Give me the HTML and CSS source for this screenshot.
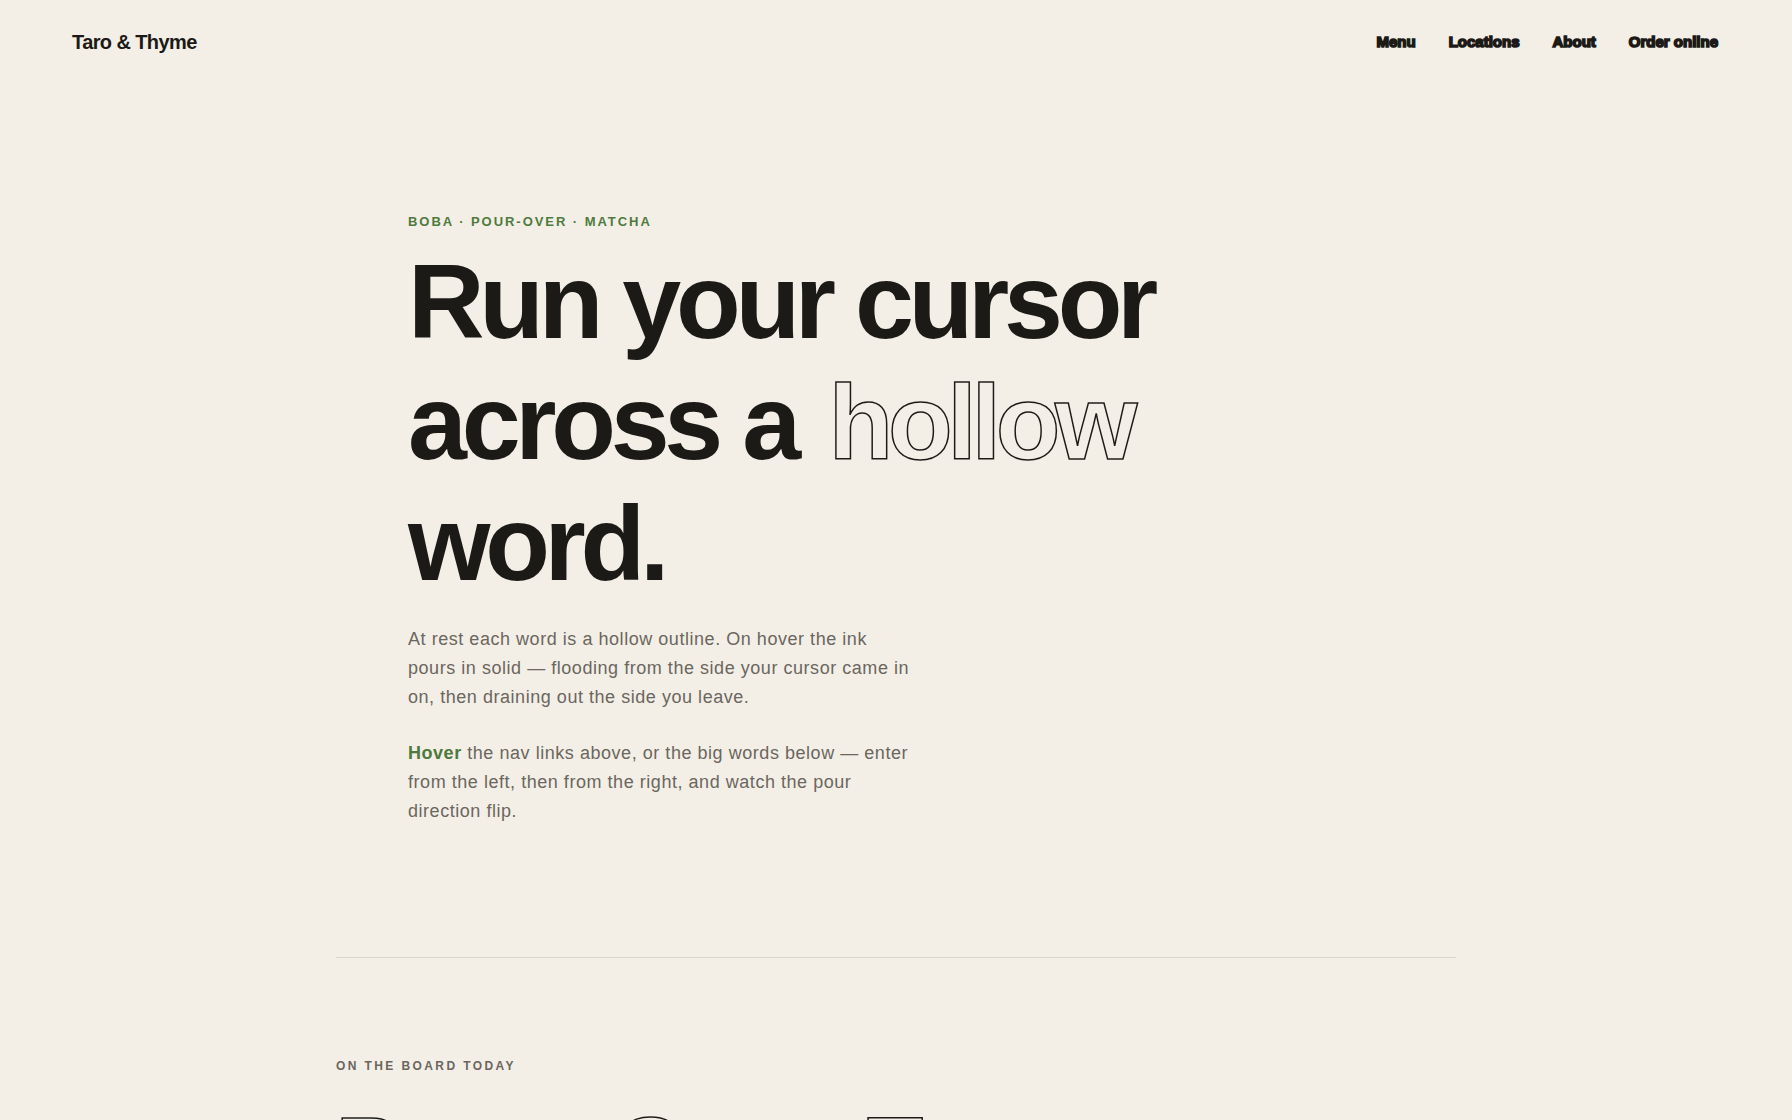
FILE: index.html
```html
<!DOCTYPE html>
<html lang="en">
<head>
<meta charset="utf-8">
<title>Taro &amp; Thyme</title>
<link rel="stylesheet" href="styles.css">
</head>
<body>
<header class="site-header">
  <a class="logo" href="#">Taro &amp; Thyme</a>
  <nav class="nav">
    <a href="#">Menu</a>
    <a href="#">Locations</a>
    <a href="#">About</a>
    <a href="#">Order online</a>
  </nav>
</header>

<main>
  <section class="hero">
    <p class="eyebrow">Boba · Pour-over · Matcha</p>
    <h1 class="headline">Run your cursor across a <span class="hollow">hollow</span> word.</h1>
    <p class="lede">At rest each word is a hollow outline. On hover the ink pours in solid — flooding from the side your cursor came in on, then draining out the side you leave.</p>
    <p class="lede lede-second"><strong class="accent">Hover</strong> the nav links above, or the big words below — enter from the left, then from the right, and watch the pour direction flip.</p>
  </section>

  <section class="board">
    <p class="label">On the board today</p>
    <ul class="big-words">
      <li>Brown</li>
      <li>Grass</li>
      <li>Taro</li>
    </ul>
  </section>
</main>
</body>
</html>
```

FILE: styles.css
```css
* { box-sizing: border-box; }

html, body {
  margin: 0;
  padding: 0;
}

body {
  background: #f3efe7;
  color: #1c1a16;
  font-family: "Liberation Sans", Arial, Helvetica, sans-serif;
  overflow: hidden;
}

a { color: inherit; text-decoration: none; }

.site-header {
  display: flex;
  justify-content: space-between;
  align-items: center;
  padding: 30px 74px 30px 72px;
}

.logo {
  font-size: 20px;
  line-height: 24px;
  font-weight: 700;
  letter-spacing: -0.03em;
}

.nav {
  display: flex;
  gap: 33px;
  align-items: center;
}

.nav a {
  font-size: 15px;
  line-height: 20px;
  font-weight: 700;
  color: #1c1a16;
  -webkit-text-stroke: 1.6px #1c1a16;
}

.hero {
  max-width: 976px;
  margin: 0 auto;
  padding: 130px 0 131px;
}

.eyebrow {
  margin: 0 0 11px;
  font-size: 13px;
  line-height: 16px;
  font-weight: 700;
  letter-spacing: 0.15em;
  text-transform: uppercase;
  color: #4e7a3d;
}

.headline {
  margin: 0;
  font-size: 106px;
  line-height: 121px;
  font-weight: 700;
  letter-spacing: -0.05em;
  color: #1c1a16;
}

.hollow {
  margin-left: 0.08em;
  color: transparent;
  -webkit-text-stroke: 1.5px #1c1a16;
}

.lede {
  margin: 21px 0 0;
  max-width: 505px;
  font-size: 18px;
  line-height: 28.8px;
  letter-spacing: 0.03em;
  color: #6b665e;
}

.lede-second { margin-top: 28px; }

.accent {
  color: #4e7a3d;
  font-weight: 700;
}

.board {
  max-width: 1120px;
  margin: 0 auto;
  border-top: 1px solid #dcd7ce;
  padding-top: 100px;
}

.label {
  margin: 0;
  font-size: 12px;
  line-height: 16px;
  font-weight: 700;
  letter-spacing: 0.2em;
  text-transform: uppercase;
  color: #6b655f;
}

.big-words {
  list-style: none;
  margin: 26px 0 0;
  padding: 0;
  display: flex;
  flex-wrap: wrap;
  gap: 0 15px;
  font-size: 92px;
  line-height: 1.1;
  font-weight: 700;
  letter-spacing: -0.05em;
  color: transparent;
  -webkit-text-stroke: 1.5px #1c1a16;
}
```
